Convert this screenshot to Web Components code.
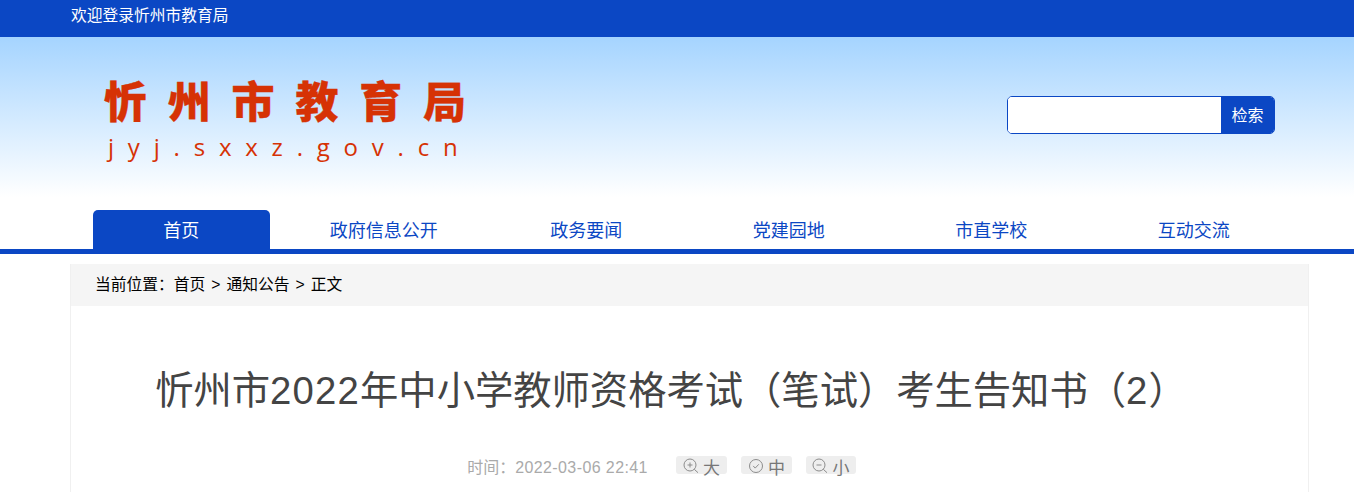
<!DOCTYPE html>
<html lang="zh-CN">
<head>
<meta charset="utf-8">
<title>忻州市教育局</title>
<style>
  html, body { margin: 0; padding: 0; background: #fff; height: 492px; overflow: hidden; }
  body { font-family: "Noto Sans CJK SC", "Liberation Sans", sans-serif; }
</style>
</head>
<body>
<site-topbar>欢迎登录忻州市教育局</site-topbar>
<site-header></site-header>
<site-nav></site-nav>
<article-card></article-card>

<script>
const CJK = '"Noto Sans CJK SC", "Liberation Sans", sans-serif';
const LATIN_CJK = '"Liberation Sans", "Noto Sans CJK SC", sans-serif';

class SiteTopbar extends HTMLElement {
  constructor() {
    super();
    this.attachShadow({ mode: 'open' });
    this.shadowRoot.innerHTML = `
      <style>
        :host { display: block; height: 37px; background: #0b47c4; color: #fff; font: 15.75px/30px ${CJK}; padding-left: 71px; }
      </style>
      <slot></slot>`;
  }
}

class SiteSearch extends HTMLElement {
  constructor() {
    super();
    this.attachShadow({ mode: 'open' });
    this.shadowRoot.innerHTML = `
      <style>
        :host { display: flex; width: 268px; height: 38px; box-sizing: border-box; border: 1px solid #0b47c4; border-radius: 5px; overflow: hidden; background: #fff; }
        input { flex: 1; min-width: 0; border: 0; outline: 0; padding: 0 8px; background: #fff; }
        button { width: 53px; border: 0; padding: 0 0 2px; background: #0b47c4; color: #fff; font: 16px ${CJK}; }
      </style>
      <input type="text" aria-label="搜索"><button type="button">检索</button>`;
  }
}

class SiteHeader extends HTMLElement {
  constructor() {
    super();
    this.attachShadow({ mode: 'open' });
    this.shadowRoot.innerHTML = `
      <style>
        :host { display: flex; justify-content: space-between; align-items: flex-start; height: 173px; box-sizing: border-box; padding: 35px 79px 0 104px; background: linear-gradient(#a5d4ff 0, #ffffff 160px); }
        .logo { color: #d63205; }
        .name { font: 900 43px/54px ${CJK}; letter-spacing: 20.8px; white-space: nowrap; -webkit-text-stroke: .3px #d63205; }
        .url { font: 24px/30px "Open Sans", ${CJK}; letter-spacing: 13.8px; white-space: nowrap; margin: 6px 0 0 4px; }
        site-search { margin-top: 24px; }
      </style>
      <div class="logo">
        <div class="name">忻州市教育局</div>
        <div class="url">jyj.sxxz.gov.cn</div>
      </div>
      <site-search></site-search>`;
  }
}

class SiteNav extends HTMLElement {
  constructor() {
    super();
    this.attachShadow({ mode: 'open' });
    const items = ['首页', '政府信息公开', '政务要闻', '党建园地', '市直学校', '互动交流'];
    this.shadowRoot.innerHTML = `
      <style>
        :host { display: block; height: 39px; border-bottom: 5px solid #0b47c4; padding-left: 80px; }
        ul { display: grid; grid-template-columns: repeat(6, 202.5px); margin: 0; padding: 0; list-style: none; height: 39px; }
        li { display: flex; justify-content: center; }
        a { display: block; width: 177px; height: 39px; text-align: center; font: 18px/39px ${CJK}; color: #0b47c4; text-decoration: none; border-radius: 5px 5px 0 0; }
        li.on a { color: #fff; background: #0b47c4; }
      </style>
      <ul>${items.map((t, i) => `<li class="${i === 0 ? 'on' : ''}"><a href="#">${t}</a></li>`).join('')}</ul>`;
  }
}

class SizeButton extends HTMLElement {
  constructor() {
    super();
    this.attachShadow({ mode: 'open' });
    const kind = this.getAttribute('kind');
    const marks = {
      big: '<path d="M4.5 7h5M7 4.5v5"/><circle cx="7" cy="7" r="6"/><path d="M11.3 11.3l3.7 3.4"/>',
      mid: '<circle cx="8" cy="8" r="6.5"/><path d="M5.2 7.9l2 2.2 3.6-3.8"/>',
      small: '<path d="M4.5 7h5"/><circle cx="7" cy="7" r="6"/><path d="M11.3 11.3l3.7 3.4"/>'
    };
    this.shadowRoot.innerHTML = `
      <style>
        :host { display: flex; align-items: center; justify-content: center; gap: 4px; height: 18px; border-radius: 3px; background: #eee; color: #777; font: 17px/18px ${CJK}; }
        svg { width: 16px; height: 16px; fill: none; stroke: #8c8c8c; stroke-width: 1; flex: none; margin-top: 1px; }
        span { position: relative; top: 2px; }
      </style>
      <svg viewBox="0 0 16 16" aria-hidden="true">${marks[kind]}</svg><span><slot></slot></span>`;
  }
}

class ArticleCard extends HTMLElement {
  constructor() {
    super();
    this.attachShadow({ mode: 'open' });
    this.shadowRoot.innerHTML = `
      <style>
        :host { display: block; width: 1239px; height: 228px; box-sizing: border-box; margin: 10px 0 0 70px; border-left: 1px solid #f0f0f0; border-right: 1px solid #f0f0f0; }
        .crumb { height: 42px; background: #f5f5f5; padding-left: 24px; color: #000; font: 15.75px/40px ${CJK}; white-space: nowrap; }
        .crumb i { font-style: normal; margin: 0 6px; font-family: "Liberation Sans", sans-serif; }
        h1 { margin: 55px 0 0; padding-right: 37px; text-align: center; color: #444; font: 400 38.3px/60px ${LATIN_CJK}; white-space: nowrap; }
        h1 b, .time b { font-weight: 400; }
        h1 b { letter-spacing: 1.2px; }
        .time b { letter-spacing: .4px; }
        .meta { display: flex; justify-content: center; align-items: center; margin-top: 35px; height: 18px; padding-right: 56px; color: #aaa; font: 16px/18px ${LATIN_CJK}; }
        .time { margin: 5px 28px 0 0; white-space: nowrap; }
        size-button { width: 51px; margin-right: 14px; }
        size-button:last-child { width: 50px; margin-right: 0; }
      </style>
      <div class="crumb">当前位置：首页<i>&gt;</i>通知公告<i>&gt;</i>正文</div>
      <h1>忻州市<b>2022</b>年中小学教师资格考试（笔试）考生告知书（<b>2</b>）</h1>
      <div class="meta">
        <span class="time">时间：<b>2022-03-06 22:41</b></span>
        <size-button kind="big">大</size-button>
        <size-button kind="mid">中</size-button>
        <size-button kind="small">小</size-button>
      </div>`;
  }
}

customElements.define('size-button', SizeButton);
customElements.define('site-search', SiteSearch);
customElements.define('site-topbar', SiteTopbar);
customElements.define('site-header', SiteHeader);
customElements.define('site-nav', SiteNav);
customElements.define('article-card', ArticleCard);
</script>
</body>
</html>
